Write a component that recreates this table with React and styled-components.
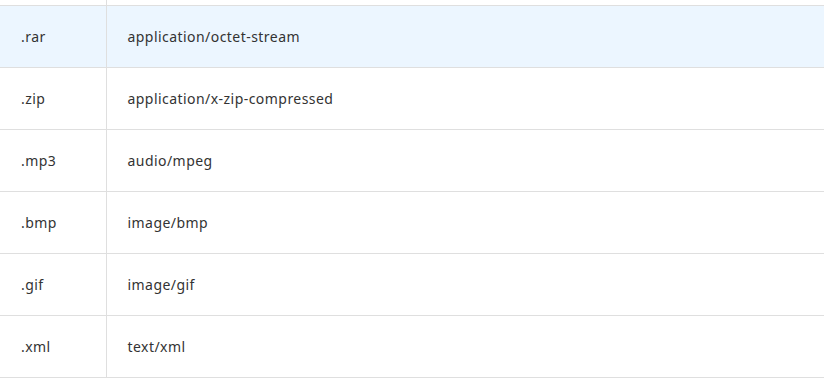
import styled, { createGlobalStyle } from "styled-components";

const rows = [
  { ext: ".rar", mime: "application/octet-stream", active: true },
  { ext: ".zip", mime: "application/x-zip-compressed" },
  { ext: ".mp3", mime: "audio/mpeg" },
  { ext: ".bmp", mime: "image/bmp" },
  { ext: ".gif", mime: "image/gif" },
  { ext: ".xml", mime: "text/xml" },
];

export default function App() {
  return (
    <>
      <Global />
      <Table>
        <tbody>
          <Row $stub>
            <ExtCell $stub />
            <MimeCell $stub />
          </Row>
          {rows.map((r) => (
            <Row key={r.ext} $active={r.active}>
              <ExtCell>{r.ext}</ExtCell>
              <MimeCell>{r.mime}</MimeCell>
            </Row>
          ))}
        </tbody>
      </Table>
    </>
  );
}

const Global = createGlobalStyle`
  body { margin: 0; background: #fff; font-family: "Noto Sans", "Open Sans", sans-serif; }
`;
const Table = styled.table`width: 824px; border-collapse: collapse; table-layout: fixed; font-size: 14px; letter-spacing: 0.45px; color: #333;`;
const Row = styled.tr`
  height: ${(p) => (p.$stub ? "5px" : "62px")};
  background: ${(p) => (p.$active ? "#ecf6ff" : "#fff")};
  border-bottom: 1px solid #dfdfdf;
`;
const ExtCell = styled.td`width: 106px; padding: 0 0 0 21px; border-right: 1px solid #dfdfdf; box-sizing: border-box; vertical-align: middle; ${(p) => p.$stub && "height: 5px; padding: 0;"}`;
const MimeCell = styled.td`padding: 0 0 0 21px; vertical-align: middle; ${(p) => p.$stub && "height: 5px; padding: 0;"}`;
